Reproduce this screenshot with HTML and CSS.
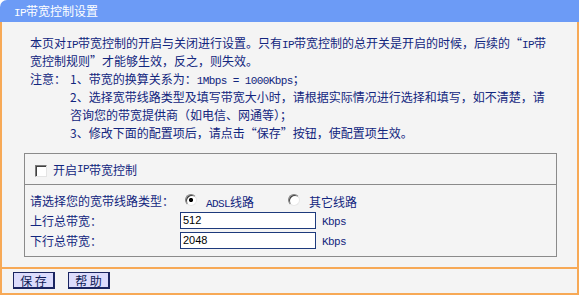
FILE: index.html
```html
<!DOCTYPE html>
<html lang="zh-CN">
<head>
<meta charset="utf-8">
<title>IP带宽控制设置</title>
<link rel="stylesheet" href="styles.css">
</head>
<body>
<div class="page">
  <div class="title"><span class="en">IP</span>带宽控制设置</div>
  <div class="panel">
    <div class="intro">
      <div class="line">本页对<span class="en">IP</span>带宽控制的开启与关闭进行设置。只有<span class="en">IP</span>带宽控制的总开关是开启的时候，后续的<span class="q">“</span><span class="en">IP</span>带</div>
      <div class="line">宽控制规则<span class="q">”</span>才能够生效，反之，则失效。</div>
      <div class="note">
        <div class="line">注意：</div>
        <div>
          <div class="line">1、带宽的换算关系为：<span class="en">1Mbps = 1000Kbps</span>；</div>
          <div class="line">2、选择宽带线路类型及填写带宽大小时，请根据实际情况进行选择和填写，如不清楚，请</div>
          <div class="line">咨询您的带宽提供商（如电信、网通等）；</div>
          <div class="line">3、修改下面的配置项后，请点击<span class="q">“</span>保存<span class="q">”</span>按钮，使配置项生效。</div>
        </div>
      </div>
    </div>
    <div class="box">
      <div class="enable">
        <input type="checkbox" class="chk" id="en">
        <label for="en"><span>开启</span><span class="en">IP</span><span>带宽控制</span></label>
      </div>
      <div class="settings">
        <div class="row">
          <div class="lbl">请选择您的宽带线路类型：</div>
          <input type="radio" name="line" class="rad" checked>
          <span class="opt"><span class="en">ADSL</span>线路</span>
          <input type="radio" name="line" class="rad rad2">
          <span class="opt">其它线路</span>
        </div>
        <div class="row">
          <div class="lbl">上行总带宽：</div>
          <input type="text" class="txt" value="512">
          <span class="en unit">Kbps</span>
        </div>
        <div class="row">
          <div class="lbl">下行总带宽：</div>
          <input type="text" class="txt" value="2048">
          <span class="en unit">Kbps</span>
        </div>
      </div>
    </div>
  </div>
  <div class="footer">
    <button class="btn">保 存</button>
    <button class="btn">帮 助</button>
  </div>
</div>
</body>
</html>
```
FILE: styles.css
```css
html, body {
  margin: 0;
  padding: 0;
  background: #ffffff;
}
body {
  font-family: "Noto Sans CJK SC", sans-serif;
  font-size: 12px;
  color: #12267e;
}
.page {
  width: 579px;
}
.en {
  font-family: "Liberation Mono", monospace;
  font-size: 11px;
  letter-spacing: -0.6px;
}
.q {
  display: inline-block;
  width: 12px;
  text-align: center;
}
.title {
  height: 22px;
  line-height: 22px;
  background: #6c9bf6;
  color: #ffffff;
  padding-left: 14px;
  border-top-left-radius: 7px;
  white-space: nowrap;
}
.panel {
  background: #f4f4f4;
  border: 2px solid #f7a956;
  border-top: 0;
  padding: 12px 0 10px 0;
}
.intro {
  padding-left: 28px;
}
.line {
  height: 18px;
  line-height: 18px;
  white-space: nowrap;
}
.note {
  display: grid;
  grid-template-columns: 40px auto;
}
.box {
  margin: 11px 0 0 22px;
  width: 533px;
  box-sizing: border-box;
  border: 1px solid #8a8a8a;
}
.enable {
  height: 30px;
  display: flex;
  align-items: center;
  padding-left: 10px;
  border-bottom: 1px solid #8a8a8a;
}
.enable label {
  display: flex;
  align-items: center;
}
.chk {
  appearance: none;
  -webkit-appearance: none;
  margin: 3px 6px 0 0;
  width: 12px;
  height: 12px;
  box-sizing: border-box;
  background: #ffffff;
  border-top: 1px solid #7a7a7a;
  border-left: 1px solid #7a7a7a;
  border-right: 1px solid #e4e4e4;
  border-bottom: 1px solid #e4e4e4;
  box-shadow: inset 1px 1px 0 #404040;
}
.settings {
  padding: 5px 0 6px 5px;
}
.row {
  display: flex;
  align-items: center;
  height: 20px;
  white-space: nowrap;
}
.lbl {
  width: 150px;
}
.rad {
  appearance: none;
  -webkit-appearance: none;
  margin: 0 0 0 5px;
  width: 12px;
  height: 12px;
  box-sizing: border-box;
  border-radius: 50%;
  background: #ffffff;
  border: 1px solid;
  border-color: #808080 #e8e8e8 #e8e8e8 #808080;
  box-shadow: inset 1px 1px 0 #404040;
}
.rad:checked {
  background: radial-gradient(circle, #000000 0, #000000 1.8px, #ffffff 2.4px);
}
.rad2 {
  margin-left: 34px;
}
.opt {
  margin-left: 9px;
  padding-top: 3px;
}
.txt {
  width: 136px;
  height: 17px;
  box-sizing: border-box;
  margin: 0;
  padding: 0 2px;
  border: 1px solid #1e3a7c;
  background: #ffffff;
  font-family: "Liberation Sans", sans-serif;
  font-size: 11px;
  color: #000000;
  outline: none;
}
.unit {
  margin-left: 6px;
  padding-top: 3px;
}
.footer {
  border: 2px solid #f7a956;
  border-top: 0;
  background: #f4f4f4;
  padding: 3px 0 4px 11px;
  height: 17px;
  display: flex;
  gap: 13px;
}
.btn {
  width: 42px;
  height: 17px;
  margin: 0;
  padding: 0;
  box-sizing: border-box;
  background: #dcdcfc;
  border: 1px solid #1a2560;
  border-right-width: 2px;
  border-bottom-width: 2px;
  font-family: "Noto Sans CJK SC", sans-serif;
  font-size: 12px;
  line-height: 13px;
  color: #0e1a55;
}
```
